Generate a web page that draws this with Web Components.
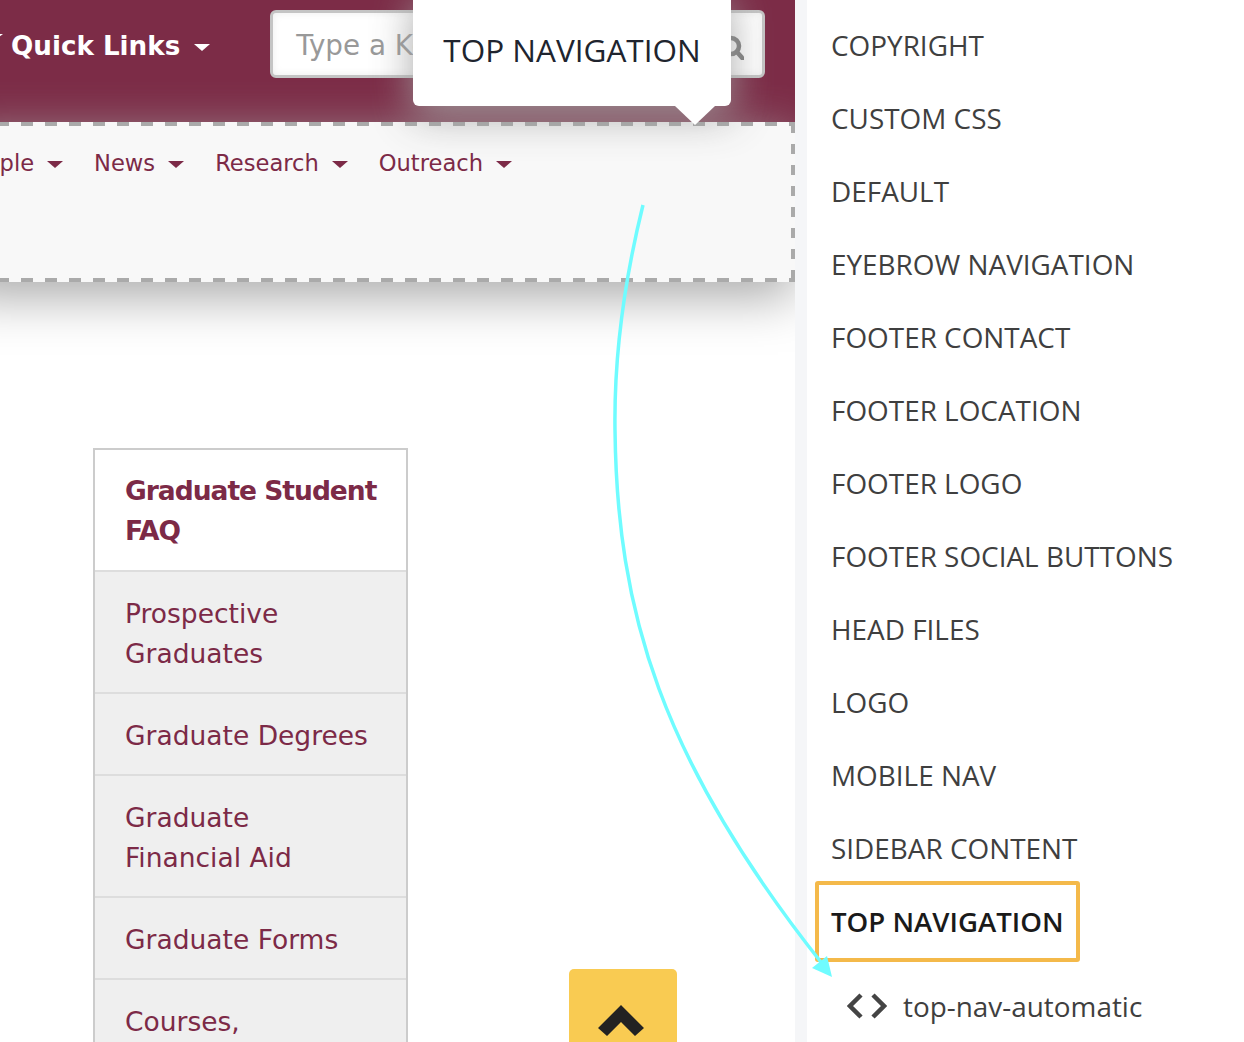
<!DOCTYPE html>
<html lang="en">
<head>
<meta charset="utf-8">
<title>Top navigation</title>
<style>
  html, body { margin: 0; padding: 0; background: #fff; }
  body { width: 1244px; height: 1042px; overflow: hidden; }
</style>
</head>
<body>
<theme-shell>
  <site-preview slot="preview">
    <site-header>
      <header-link>Quick Links</header-link>
    </site-header>
    <top-nav>
      <nav-link>People</nav-link>
      <nav-link>News</nav-link>
      <nav-link>Research</nav-link>
      <nav-link>Outreach</nav-link>
    </top-nav>
    <side-nav>
      <side-link active>Graduate Student<br>FAQ</side-link>
      <side-link>Prospective Graduates</side-link>
      <side-link>Graduate Degrees</side-link>
      <side-link>Graduate<br>Financial Aid</side-link>
      <side-link>Graduate Forms</side-link>
      <side-link>Courses,<br>Schedules</side-link>
    </side-nav>
    <back-top></back-top>
    <call-out>TOP NAVIGATION</call-out>
  </site-preview>
  <file-list slot="files">
    <file-item>COPYRIGHT</file-item>
    <file-item>CUSTOM CSS</file-item>
    <file-item>DEFAULT</file-item>
    <file-item>EYEBROW NAVIGATION</file-item>
    <file-item>FOOTER CONTACT</file-item>
    <file-item>FOOTER LOCATION</file-item>
    <file-item>FOOTER LOGO</file-item>
    <file-item>FOOTER SOCIAL BUTTONS</file-item>
    <file-item>HEAD FILES</file-item>
    <file-item>LOGO</file-item>
    <file-item>MOBILE NAV</file-item>
    <file-item>SIDEBAR CONTENT</file-item>
    <file-item active>TOP NAVIGATION</file-item>
    <file-item code>top-nav-automatic</file-item>
  </file-list>
</theme-shell>

<script>
const LEFT_FONT = '"DejaVu Sans", sans-serif';
const RIGHT_FONT = '"Open Sans", sans-serif';

// small helper, all the elements below are just a template + open shadow
function define(name, html) {
  const tpl = document.createElement('template');
  tpl.innerHTML = html;
  customElements.define(name, class extends HTMLElement {
    constructor() {
      super();
      this.attachShadow({ mode: 'open' }).appendChild(tpl.content.cloneNode(true));
    }
  });
}

define('theme-shell', `
  <style>
    :host { display: grid; grid-template-columns: 795px 12px 437px; height: 1042px; position: relative; overflow: hidden; }
    .gutter { background: #f5f6f8; }
    svg { position: absolute; left: 0; top: 0; pointer-events: none; }
  </style>
  <slot name="preview"></slot>
  <div class="gutter"></div>
  <slot name="files"></slot>
  <svg width="1244" height="1042" viewBox="0 0 1244 1042" fill="none">
    <path d="M643 205C622 290 614 360 615 430C617 610 660 760 824 966" stroke="#6ffcff" stroke-width="3.5"/>
    <path d="M832 977L812 968L827 956Z" fill="#6ffcff"/>
  </svg>
`);

define('site-preview', `
  <style>
    :host { display: block; position: relative; overflow: hidden; height: 1042px; background: #fff; font-family: ${LEFT_FONT}; }
  </style>
  <slot></slot>
`);

define('site-header', `
  <style>
    :host { display: flex; height: 122px; background: #7c2c47; color: #fff; padding-left: 11px; box-sizing: border-box; position: relative; }
    .stub { position: absolute; left: -13px; top: 44px; border: 8px solid transparent; border-top: 6px solid #fff; border-bottom: 0; margin-top: -10px; }
    .search { margin: 10px 0 0 60px; width: 495px; height: 68px; box-sizing: border-box; border: 3px solid #c4c4c4; border-radius: 6px;
      background: #fff; box-shadow: inset 0 0 8px rgba(0,0,0,.08); display: flex; align-items: center; justify-content: space-between;
      padding: 2px 18px 0 23px; color: #999; font-size: 27.8px; }
    svg { margin-top: 3px; }
  </style>
  <div class="stub"></div>
  <slot></slot>
  <div class="search">
    <span>Type a Keyword</span>
    <svg width="26" height="26" viewBox="0 0 26 26" fill="none" stroke="#777" stroke-width="4.5">
      <circle cx="13" cy="12" r="8"/><path d="M19 18l7 8"/>
    </svg>
  </div>
`);

define('header-link', `
  <style>
    :host { display: flex; align-items: center; gap: 14px; height: 92px; font-weight: bold; font-size: 26.2px; white-space: nowrap; }
    i { border: 8px solid transparent; border-top: 7px solid #fff; border-bottom: 0; margin-top: 3px; }
  </style>
  <slot></slot><i></i>
`);

define('top-nav', `
  <style>
    :host { display: flex; gap: 31px; height: 160px; box-sizing: border-box; margin: 0 0 0 -41px; padding: 22px 0 0 0; position: relative;
      background-color: #f8f8f8;
      background-image:
        repeating-linear-gradient(90deg, #aaa 0 2px, transparent 2px 14px, #aaa 14px 24px),
        repeating-linear-gradient(90deg, #aaa 0 2px, transparent 2px 14px, #aaa 14px 24px),
        repeating-linear-gradient(180deg, transparent 0 1px, #aaa 1px 11px, transparent 11px 21px);
      background-size: 100% 4px, 100% 4px, 4px 100%;
      background-position: 0 0, 0 100%, 100% 0;
      background-repeat: no-repeat;
      box-shadow: 0 15px 48px #aaa; }
  </style>
  <slot></slot>
`);

define('nav-link', `
  <style>
    :host { display: flex; align-items: center; gap: 13px; height: 38px; font-size: 22.6px; color: #7c2a47; white-space: nowrap; }
    i { border: 8px solid transparent; border-top: 7px solid #7c2a47; border-bottom: 0; margin-top: 3px; }
  </style>
  <slot></slot><i></i>
`);

define('side-nav', `
  <style>
    :host { display: block; width: 315px; box-sizing: border-box; margin: 166px 0 0 93px; border: 2px solid #ccc; }
  </style>
  <slot></slot>
`);

define('side-link', `
  <style>
    :host { display: block; padding: 22px 30px 18px; line-height: 40px; font-size: 26.5px; color: #7c2a47; background: #efefef; border-bottom: 2px solid #ddd; }
    :host([active]) { background: #fff; font-weight: bold; padding: 21px 30px 19px; letter-spacing: -1px; white-space: nowrap; }
  </style>
  <slot></slot>
`);

define('back-top', `
  <style>
    :host { position: absolute; left: 569px; top: 969px; width: 108px; height: 90px; background: #f9cb52; border-radius: 5px 5px 0 0; display: flex; justify-content: center; padding: 36px 4px 0 0; box-sizing: border-box; }
  </style>
  <svg width="46" height="32" viewBox="0 0 46 32"><path d="M23 0L46 23L37 31L23 17L9 31L0 23Z" fill="#222"/></svg>
`);

define('call-out', `
  <style>
    :host { position: absolute; left: 413px; top: -10px; width: 318px; height: 116px; box-sizing: border-box; background: #fff; border-radius: 6px;
      display: flex; align-items: center; justify-content: center; padding-top: 2px; font: 31.5px ${RIGHT_FONT}; color: #20242e; white-space: nowrap;
      box-shadow: 0 10px 40px rgba(160,160,160,.9); }
    :host::after { content: ''; position: absolute; left: 262px; top: 116px; border: 20px solid transparent; border-top: 19px solid #fff; border-bottom: 0; }
  </style>
  <slot></slot>
`);

define('file-list', `
  <style>
    :host { display: block; padding: 8px 0 0 24px; font-family: ${RIGHT_FONT}; background: #fff; }
  </style>
  <slot></slot>
`);

class FileItem extends HTMLElement {
  constructor() {
    super();
    const code = this.hasAttribute('code');
    this.attachShadow({ mode: 'open' }).innerHTML = `
      <style>
        :host { display: block; height: 73px; }
        :host([code]) { margin-top: 12px; }
        .row { display: inline-flex; align-items: center; gap: 16px; height: 73px; font-size: 27.9px; color: #3f3f3f; white-space: nowrap; }
        :host([code]) .row { padding-left: 16px; }
        :host([active]) .row { height: 81px; box-sizing: border-box; margin: -3px 0 -5px -16px; padding: 0 12px 2px; border: 4px solid #f4b94a; border-radius: 3px; font-size: 27.6px; font-weight: 600; color: #1a1a1a; }
      </style>
      <div class="row">
        ${code ? `<svg width="40" height="26" viewBox="0 0 40 26" fill="none" stroke="#444" stroke-width="4.5"><path d="M14 2L3 13L14 24"/><path d="M26 2L37 13L26 24"/></svg>` : ''}
        <slot></slot>
      </div>`;
  }
}
customElements.define('file-item', FileItem);
</script>
</body>
</html>
